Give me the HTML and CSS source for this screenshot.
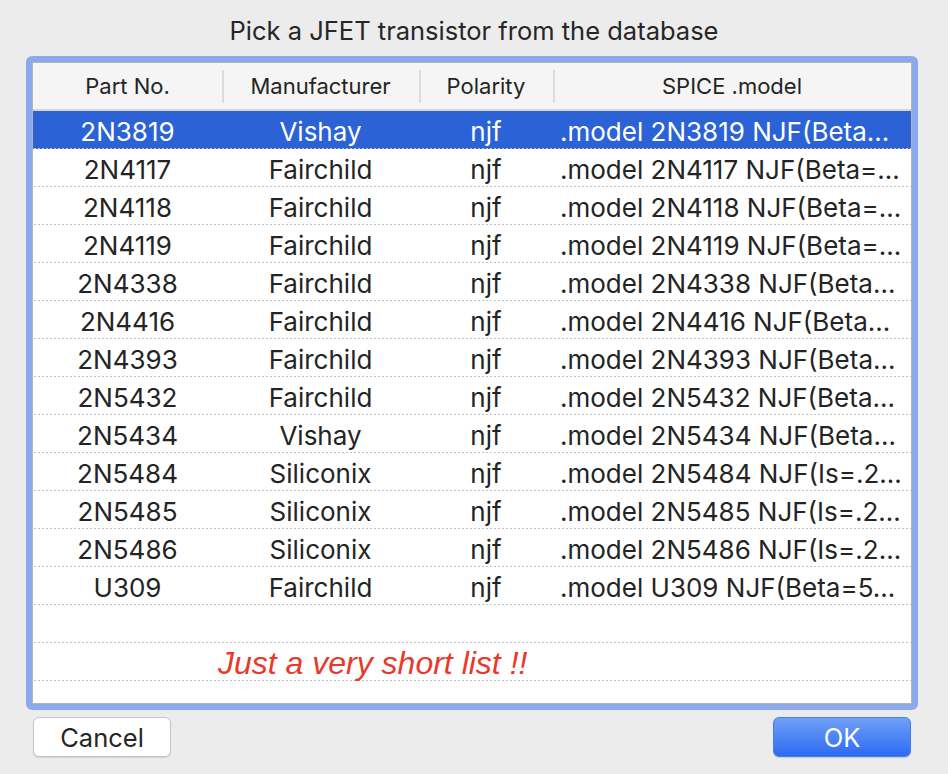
FILE: index.html
```html
<!DOCTYPE html>
<html>
<head>
<meta charset="utf-8">
<link rel="stylesheet" href="styles.css">
</head>
<body>
<div class="dialog">
  <div class="title">Pick a JFET transistor from the database</div>
  <div class="frame">
    <div class="table">
      <div class="head">
        <div class="hc c1">Part No.</div>
        <div class="hc c2 sep">Manufacturer</div>
        <div class="hc c3 sep">Polarity</div>
        <div class="hc c4 sep">SPICE .model</div>
      </div>
      <div class="row sel"><div class="c1">2N3819</div><div class="c2">Vishay</div><div class="c3">njf</div><div class="c4 m">.model 2N3819 NJF(Beta…</div></div>
      <div class="row"><div class="c1">2N4117</div><div class="c2">Fairchild</div><div class="c3">njf</div><div class="c4 m">.model 2N4117 NJF(Beta=…</div></div>
      <div class="row"><div class="c1">2N4118</div><div class="c2">Fairchild</div><div class="c3">njf</div><div class="c4 m">.model 2N4118 NJF(Beta=…</div></div>
      <div class="row"><div class="c1">2N4119</div><div class="c2">Fairchild</div><div class="c3">njf</div><div class="c4 m">.model 2N4119 NJF(Beta=…</div></div>
      <div class="row"><div class="c1">2N4338</div><div class="c2">Fairchild</div><div class="c3">njf</div><div class="c4 m">.model 2N4338 NJF(Beta…</div></div>
      <div class="row"><div class="c1">2N4416</div><div class="c2">Fairchild</div><div class="c3">njf</div><div class="c4 m">.model 2N4416 NJF(Beta…</div></div>
      <div class="row"><div class="c1">2N4393</div><div class="c2">Fairchild</div><div class="c3">njf</div><div class="c4 m">.model 2N4393 NJF(Beta…</div></div>
      <div class="row"><div class="c1">2N5432</div><div class="c2">Fairchild</div><div class="c3">njf</div><div class="c4 m">.model 2N5432 NJF(Beta…</div></div>
      <div class="row"><div class="c1">2N5434</div><div class="c2">Vishay</div><div class="c3">njf</div><div class="c4 m">.model 2N5434 NJF(Beta…</div></div>
      <div class="row"><div class="c1">2N5484</div><div class="c2">Siliconix</div><div class="c3">njf</div><div class="c4 m">.model 2N5484 NJF(Is=.2…</div></div>
      <div class="row"><div class="c1">2N5485</div><div class="c2">Siliconix</div><div class="c3">njf</div><div class="c4 m">.model 2N5485 NJF(Is=.2…</div></div>
      <div class="row"><div class="c1">2N5486</div><div class="c2">Siliconix</div><div class="c3">njf</div><div class="c4 m">.model 2N5486 NJF(Is=.2…</div></div>
      <div class="row"><div class="c1">U309</div><div class="c2">Fairchild</div><div class="c3">njf</div><div class="c4 m">.model U309 NJF(Beta=5…</div></div>
      <div class="row"></div>
      <div class="row note"><span>Just a very short list !!</span></div>
      <div class="row"></div>
    </div>
  </div>
  <div class="buttons">
    <button class="btn cancel">Cancel</button>
    <button class="btn ok">OK</button>
  </div>
</div>
</body>
</html>
```
FILE: styles.css
```css
html, body {
  margin: 0;
  padding: 0;
}
body {
  width: 948px;
  height: 774px;
  background: #ececec;
  font-family: Inter, "Open Sans", "Liberation Sans", sans-serif;
  color: #242424;
  overflow: hidden;
}
.dialog {
  display: flex;
  flex-direction: column;
}
.title {
  height: 56px;
  line-height: 62px;
  text-align: center;
  font-size: 25.5px;
  color: #262626;
}
.frame {
  margin-left: 26px;
  width: 880px;
  height: 642px;
  border: 6px solid #8caaea;
  border-radius: 6px;
  background: #8caaea;
}
.table {
  height: 640px;
  border: 1px solid #b4b4b4;
  background: #fff;
  overflow: hidden;
  display: flex;
  flex-direction: column;
}
.head {
  display: flex;
  height: 46px;
  flex: none;
  background: #f5f5f5;
  border-bottom: 2px solid #d5d5d5;
  font-size: 22px;
}
.hc {
  display: flex;
  align-items: center;
  justify-content: center;
  box-sizing: border-box;
}
.head .hc.sep {
  background-image: linear-gradient(#dcdcdc, #dcdcdc);
  background-size: 2px 33px;
  background-position: 0 7px;
  background-repeat: no-repeat;
}
.c1 { width: 189px; flex: none; }
.c2 { width: 197px; flex: none; }
.c3 { width: 134px; flex: none; }
.c4 { flex: 1; min-width: 0; }
.row {
  display: flex;
  flex: none;
  height: 38px;
  box-sizing: border-box;
  align-items: center;
  font-size: 26px;
  background-image: linear-gradient(to right, #c2c2c2 50%, transparent 50%);
  background-size: 4px 1px;
  background-position: 1px 100%;
  background-repeat: repeat-x;
  padding-top: 2px;
}
.row > div {
  text-align: center;
  white-space: nowrap;
  overflow: hidden;
}
.row > .m {
  text-align: left;
  padding-left: 7px;
}
.row.sel {
  background-color: #2b62d6;
  color: #fff;
}
.note {
  font-family: "Liberation Sans", Arial, sans-serif;
  font-style: italic;
  font-size: 32px;
  color: #e8392b;
}
.note span {
  padding-left: 185px;
}
.buttons {
  display: flex;
  justify-content: space-between;
  padding: 7px 37px 0 33px;
}
.btn {
  width: 138px;
  height: 40px;
  border-radius: 6px;
  font-family: Inter, "Open Sans", "Liberation Sans", sans-serif;
  font-size: 25.5px;
  padding: 0;
  box-sizing: border-box;
}
.cancel {
  background: #fff;
  color: #262626;
  border: 1px solid #c6c6c6;
  box-shadow: 0 1px 1px rgba(0,0,0,0.12);
}
.ok {
  background: linear-gradient(#6fa0f6, #2d6af4);
  color: #fff;
  border: 1px solid #4a7fe8;
  box-shadow: 0 1px 1px rgba(0,0,0,0.15);
}
```
